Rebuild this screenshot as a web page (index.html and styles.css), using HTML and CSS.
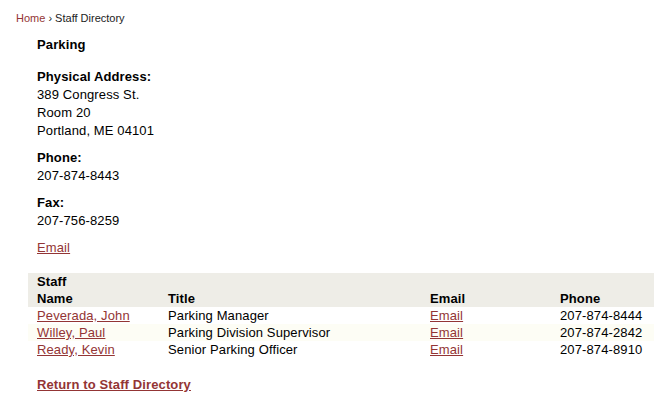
FILE: index.html
```html
<!DOCTYPE html>
<html>
<head>
<meta charset="utf-8">
<link rel="stylesheet" href="styles.css">
</head>
<body>
<div class="crumbs"><a href="#">Home</a> › Staff Directory</div>
<div class="content">
  <h1 class="dept">Parking</h1>
  <div class="block">
    <div class="label">Physical Address:</div>
    <div>389 Congress St.</div>
    <div>Room 20</div>
    <div>Portland, ME 04101</div>
  </div>
  <div class="block">
    <div class="label">Phone:</div>
    <div>207-874-8443</div>
  </div>
  <div class="block">
    <div class="label">Fax:</div>
    <div>207-756-8259</div>
  </div>
  <div class="block"><a href="#">Email</a></div>
</div>
<table class="staff">
  <thead>
    <tr><th colspan="4">Staff</th></tr>
    <tr><th class="c1">Name</th><th class="c2">Title</th><th class="c3">Email</th><th class="c4">Phone</th></tr>
  </thead>
  <tbody>
    <tr><td><a href="#">Peverada, John</a></td><td>Parking Manager</td><td><a href="#">Email</a></td><td>207-874-8444</td></tr>
    <tr class="alt"><td><a href="#">Willey, Paul</a></td><td>Parking Division Supervisor</td><td><a href="#">Email</a></td><td>207-874-2842</td></tr>
    <tr><td><a href="#">Ready, Kevin</a></td><td>Senior Parking Officer</td><td><a href="#">Email</a></td><td>207-874-8910</td></tr>
  </tbody>
</table>
<div class="back"><a href="#">Return to Staff Directory</a></div>
</body>
</html>
```
FILE: styles.css
```css
html, body {
  margin: 0;
  padding: 0;
  background: #fff;
  overflow-x: hidden;
}
body {
  font-family: "Liberation Sans", Arial, sans-serif;
  font-size: 13px;
  line-height: 18px;
  letter-spacing: 0.12px;
  color: #000;
}
a {
  color: #933535;
  text-decoration: underline;
}
.crumbs {
  padding: 12px 16px 0;
  font-size: 11px;
  line-height: 13px;
  letter-spacing: 0;
  color: #222;
}
.crumbs a {
  text-decoration: none;
}
.content {
  margin-left: 37px;
}
.dept {
  font-size: 13px;
  line-height: 18px;
  font-weight: bold;
  margin: 11px 0 14px;
}
.block {
  margin-bottom: 9px;
}
.label {
  font-weight: bold;
}
.staff {
  margin: 16px 0 0 28px;
  width: 626px;
  border-collapse: collapse;
}
.staff th, .staff td {
  padding: 0 0 0 9px;
  text-align: left;
  line-height: 17px;
  height: 17px;
  white-space: nowrap;
}
.staff thead th {
  background: #eeede7;
  font-weight: bold;
}
.c1 { width: 122px; }
.c2 { width: 253px; }
.c3 { width: 121px; }
.staff tr.alt td {
  background: #fdfdf5;
}
.back {
  margin: 18px 0 0 37px;
  font-weight: bold;
}
```
